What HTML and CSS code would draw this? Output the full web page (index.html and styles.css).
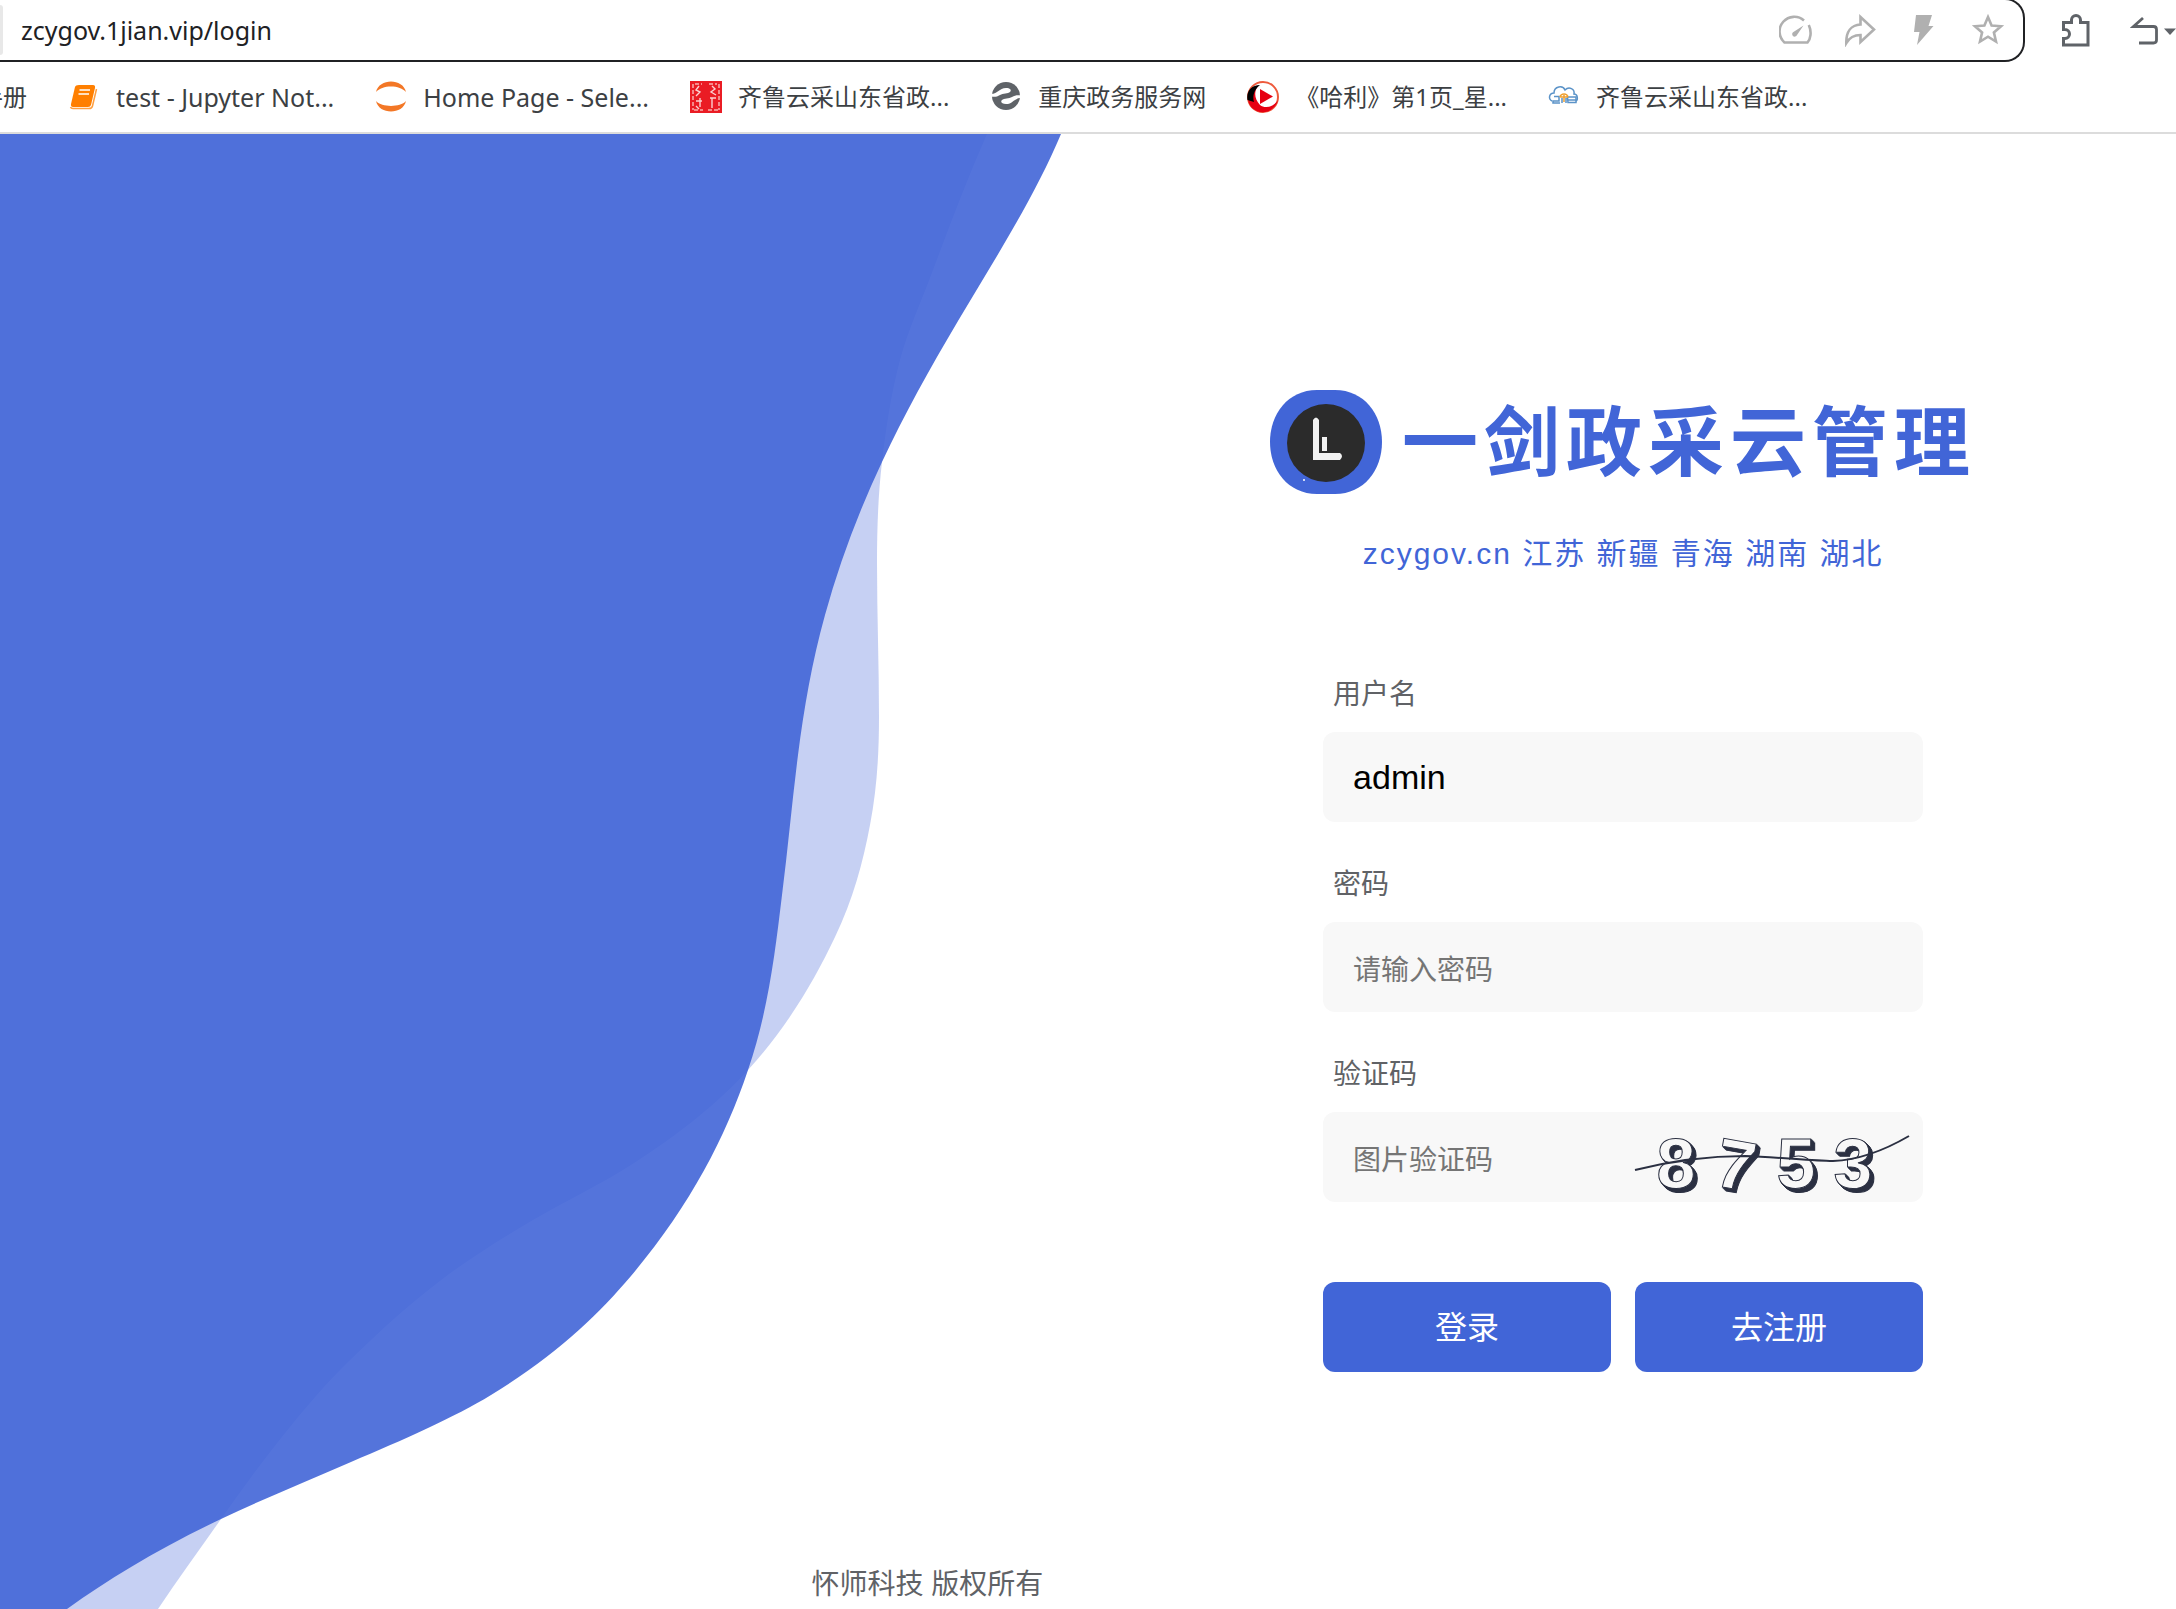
FILE: index.html
```html
<!DOCTYPE html>
<html lang="zh-CN">
<head>
    <meta charset="UTF-8">
    <meta name="viewport" content="width=device-width, initial-scale=1.0">
    <title>一剑政采云管理</title>
    <link rel="stylesheet" href="styles.css">
</head>
<body>
    <header class="browser">
        <div class="toolbar">
            <div class="address">
                <span class="chip"></span>
                <input class="url" type="text" aria-label="地址" value="zcygov.1jian.vip/login">
                <button class="tool" aria-label="测速">
                    <svg width="34" height="34" viewBox="0 0 34 34" fill="none" stroke="#b0b0b0" stroke-width="2.6">
                        <path d="M25 7.500A14.600 14.600 0 0 0 5.500 29.500H28.500C31.500 26 33 19 29.800 12"/>
                        <path d="M24.500 12.500L18 22a2.500 2.500 0 1 1-3.200-3.200Z" fill="#b0b0b0" stroke="none"/>
                    </svg>
                </button>
                <button class="tool" aria-label="分享">
                    <svg width="34" height="34" viewBox="0 0 34 34" fill="none" stroke="#b0b0b0" stroke-width="2.600">
                        <path d="M17.500 4V11.500C8 12 3 19 3.300 30C6.500 24.500 10.500 22 17.500 22V29L31 16.500Z"/>
                    </svg>
                </button>
                <button class="tool" aria-label="加速">
                    <svg width="34" height="34" viewBox="0 0 34 34" fill="#b0b0b0">
                        <path d="M9 2H25L21.500 13H26.500L10 32L12.500 19H7Z"/>
                    </svg>
                </button>
                <button class="tool" aria-label="收藏">
                    <svg width="34" height="34" viewBox="0 0 34 34" fill="none" stroke="#b0b0b0" stroke-width="2.600">
                        <path d="M17 4L20.600 12.500L30 13.300L22.900 19.400L25 28.500L17 23.700L9 28.500L11.100 19.400L4 13.300L13.400 12.500Z"/>
                    </svg>
                </button>
            </div>
            <button class="tool dark" aria-label="扩展">
                <svg width="34" height="34" viewBox="0 0 34 34" fill="none" stroke="#5f6368" stroke-width="3">
                    <path d="M4.500 8.500H12.500V6a4.500 4.500 0 0 1 9 0V8.500H29V31H4.500V24.500H6a4.500 4.500 0 0 0 0-9H4.500Z"/>
                </svg>
            </button>
            <button class="tool dark" aria-label="撤销">
                <svg width="46" height="34" viewBox="0 0 46 34" fill="none" stroke="#5f6368" stroke-width="2.800">
                    <path d="M13 4L3.500 12.500H23.500Q26.500 12.500 26.500 15.500V26Q26.500 29 23.500 29H9"/>
                    <path d="M34 14.500H46L40 21Z" fill="#5f6368" stroke="none"/>
                </svg>
            </button>
        </div>

        <nav class="bookmarks">
            <a class="bookmark cut" href="#">手册</a>
            <a class="bookmark latin" href="#">
                <svg width="32" height="32" viewBox="0 0 32 32">
                    <path d="M11 4H25Q27.500 4 27 7L23 24Q22.500 26 20 26H5Q2.500 26 3 23L7 6Q7.500 4 11 4Z" fill="#ff7f00"/>
                    <path d="M11.500 9H22M10.500 13H21" stroke="#fff" stroke-width="1.500"/>
                    <path d="M28.500 8L24.500 25Q24 27.500 21 27.500H5Q3 27.500 2.500 26" fill="none" stroke="#ff9f40" stroke-width="1.500"/>
                </svg>
                <span>test - Jupyter Not...</span>
            </a>
            <a class="bookmark latin" href="#">
                <svg width="32" height="32" viewBox="0 0 32 32" fill="#f37726">
                    <path d="M1 11C4-3 28-3 31 11C25 3.500 7 3.500 1 11Z"/>
                    <path d="M1 20C4 34 28 34 31 20C25 26.500 7 26.500 1 20Z"/>
                </svg>
                <span>Home Page - Sele...</span>
            </a>
            <a class="bookmark" href="#">
                <svg width="32" height="32" viewBox="0 0 32 32" fill="none">
                    <path d="M0 0H32V32H0Z" fill="#ea1c24"/>
                    <path d="M3 3V29M29 3V29M5 3H12M19 3H27M4 29H13M18 29H28" stroke="#f58a8a" stroke-width="2" stroke-dasharray="4 2"/>
                    <path d="M9 5L6 9L10 11L6 15M10 17V26M6 20H12M22 5L25 8L21 11L26 14M20 17H26M22 17V27M6 25L9 28" stroke="#fbd0d0" stroke-width="1.400"/>
                </svg>
                <span>齐鲁云采山东省政...</span>
            </a>
            <a class="bookmark" href="#">
                <svg width="32" height="32" viewBox="0 0 32 32">
                    <circle cx="16" cy="15" r="14" fill="#5f6368"/>
                    <path d="M1 13C8 13 9 7 16 7C20 7 22 9 20 11C18 13 13 12 10 14C7 16 4 16 1 15.500Z" fill="#fff"/>
                    <path d="M31 17C24 17 23 23 16 23C12 23 10 21 12 19C14 17 19 18 22 16C25 14 28 14 31 14.500Z" fill="#fff"/>
                </svg>
                <span>重庆政务服务网</span>
            </a>
            <a class="bookmark" href="#">
                <svg width="32" height="32" viewBox="0 0 32 32">
                    <circle cx="16" cy="16" r="15" fill="#fff" stroke="#ee5a3c" stroke-width="2"/>
                    <path d="M11 5C1 8-2 20 5 27C14 35 28 31 31 19C27 26 18 28 13 24C7 18 7 10 11 5Z" fill="#e60012"/>
                    <path d="M13 4C4 4-1 11 .500 19L7 21C5 14 8 8 13 4Z" fill="#000"/>
                    <path d="M13 8L26 15.500L13 23Z" fill="#e60012"/>
                </svg>
                <span>《哈利》第1页_星...</span>
            </a>
            <a class="bookmark" href="#">
                <svg width="32" height="32" viewBox="0 0 32 32" fill="none" stroke="#5b93c8" stroke-width="1.500">
                    <path d="M4 20C0 18 1 12 6 12C6 5 15 4 17 9C21 5 27 8 26 13C30 13 30 19 28 20"/>
                    <path d="M6 15.500H11V20H5V22H12M19.500 16H28V21.500H20ZM20 19H28M14 17V22M18 17V22"/>
                    <path d="M12 16C13 12 19 12 20 16M12 16H20M16 14V21" stroke="#f0a030"/>
                </svg>
                <span>齐鲁云采山东省政...</span>
            </a>
        </nav>
    </header>

    <main class="page">
        <!-- background wave -->
        <svg class="wave" viewBox="0 134 1061 1475" preserveAspectRatio="xMinYMin meet" aria-hidden="true">
            <path class="wave-back" d="M0 134H987C967 179 950 225 933 270C922 300 908 330 900 360C891 394 886 428 882 462C878 496 877 530 877 564C877 615 879 666 879 717C879 753 877 789 870 825C863 862 853 900 835 937C814 981 788 1026 748 1070C719 1102 681 1133 631 1165C603 1183 564 1202 533 1220C502 1238 474 1256 449 1274C426 1291 405 1309 386 1326C361 1349 336 1373 316 1396C280 1437 250 1478 221 1519C200 1549 178 1579 158 1609H0Z"/>
            <path class="wave-front" d="M0 134H1061C1035 196 995 259 958 321C930 368 904 415 882 462C858 513 839 564 825 615C812 662 804 708 798 755C792 802 788 848 782 895C775 953 768 1012 748 1070C725 1139 689 1207 631 1276C597 1316 556 1355 491 1395C455 1417 403 1440 351 1462C307 1481 261 1500 221 1519C158 1549 109 1579 67 1609H0Z"/>
        </svg>

        <section class="login">
            <div class="brand">
                <svg class="logo" viewBox="0 0 112 104">
                    <path d="M47 0H65C94 0 112 24 112 52C112 80 94 104 65 104H47C18 104 0 80 0 52C0 24 18 0 47 0Z" fill="#4165d7"/>
                    <circle cx="56" cy="53" r="39" fill="#2b2b2b"/>
                    <path d="M43 30Q46 25 49 30V63H70Q74 66 70 70H43Z" fill="#f2f2f2"/>
                    <path d="M52 47H57V61H52Z" fill="#f2f2f2"/>
                    <circle cx="34" cy="90" r="1" fill="#fff"/>
                </svg>
                <h1>一剑政采云管理</h1>
            </div>
            <p class="subtitle">zcygov.cn 江苏 新疆 青海 湖南 湖北</p>

            <form class="login-form">
                <label for="username">用户名</label>
                <div class="field">
                    <input type="text" id="username" value="admin">
                </div>

                <label for="password">密码</label>
                <div class="field">
                    <input type="password" id="password" placeholder="请输入密码">
                </div>

                <label for="code">验证码</label>
                <div class="field">
                    <input type="text" id="code" placeholder="图片验证码">
                    <button type="button" class="captcha" aria-label="刷新验证码">
                        <svg viewBox="0 0 288 90">
                            <g class="digits">
                                <text x="41" y="76">8</text>
                                <text x="101" y="77" transform="rotate(10 101 52)">7</text>
                                <text x="161" y="76">5</text>
                                <text x="218" y="76">3</text>
                            </g>
                            <path d="M0 58C40 48 75 44 110 44C145 45 175 49 198 49C225 48 250 38 274 24" fill="none" stroke="#2b3042" stroke-width="2"/>
                        </svg>
                    </button>
                </div>

                <div class="actions">
                    <button type="submit">登录</button>
                    <button type="button">去注册</button>
                </div>
            </form>
        </section>

        <footer>怀师科技 版权所有</footer>
    </main>
</body>
</html>
```

FILE: styles.css
```css
html, body
{
    margin: 0;
    padding: 0;
}

*
{
    box-sizing: border-box;
}

body
{
    display: flex;
    flex-direction: column;
    min-height: 100vh;
    overflow-x: hidden;
    font-family: "Liberation Sans", "Noto Sans CJK SC", sans-serif;
    background-color: #fff;
}

button
{
    padding: 0;
    border: none;
    background: none;
    cursor: pointer;
}

/* browser bar */

.browser
{
    border-bottom: 2px solid #dcdcdc;
    font-family: "Noto Sans", "Noto Sans CJK SC", sans-serif;
}

.toolbar
{
    display: flex;
    align-items: center;
    height: 62px;
}

.address
{
    display: flex;
    flex: 1;
    align-items: center;
    gap: 30px;
    height: 64px;
    margin-top: -2px;
    margin-right: 34px;
    padding-right: 18px;
    border: 2px solid #202124;
    border-left: none;
    border-radius: 0 20px 20px 0;
}

.chip
{
    width: 3px;
    height: 50px;
    border-radius: 0 4px 4px 0;
    background-color: #e8e8e8;
}

.url
{
    flex: 1;
    min-width: 0;
    margin-left: -12px;
    padding: 0;
    border: none;
    outline: none;
    background: none;
    font-family: inherit;
    font-size: 25px;
    color: #202124;
}

.tool
{
    display: flex;
}

.tool.dark
{
    margin-right: 37px;
}

.tool.dark:last-child
{
    margin-right: 0;
}

.bookmarks
{
    display: flex;
    align-items: center;
    gap: 41px;
    height: 70px;
    overflow: hidden;
}

.bookmark
{
    display: flex;
    align-items: center;
    gap: 16px;
    font-size: 24px;
    line-height: 36px;
    color: #3c4043;
    text-decoration: none;
    white-space: nowrap;
}

.bookmark.latin
{
    font-size: 25px;
}

.bookmark.cut
{
    margin-left: -21px;
}

/* login page */

.page
{
    position: relative;
    display: grid;
    flex: 1;
    grid-template-columns: 30fr 31fr;
    grid-template-rows: 1fr auto;
}

.wave
{
    position: absolute;
    top: 0;
    left: 0;
    height: 100%;
}

.wave-back
{
    fill: #4165d7;
    opacity: 0.3;
}

.wave-front
{
    fill: #4165d7;
    opacity: 0.9;
}

.login
{
    display: flex;
    grid-column: 2;
    flex-direction: column;
    align-items: center;
    padding-top: 256px;
}

.brand
{
    display: flex;
    align-items: center;
    gap: 20px;
    height: 104px;
}

.logo
{
    width: 112px;
    height: 104px;
}

h1
{
    margin: 0;
    padding-top: 4px;
    font-size: 76px;
    font-weight: 700;
    line-height: 104px;
    letter-spacing: 6px;
    color: #4165d7;
    white-space: nowrap;
}

.subtitle
{
    margin: 38px 0 76px;
    font-size: 30px;
    line-height: 44px;
    letter-spacing: 2px;
    color: #4165d7;
}

.login-form
{
    width: 100%;
    max-width: 600px;
}

.login-form label
{
    display: block;
    padding: 21px 10px 15px;
    font-size: 28px;
    line-height: 44px;
    color: #606266;
}

.field
{
    display: flex;
    height: 90px;
    margin-bottom: 20px;
    border-radius: 12px;
    background-color: #f8f8f8;
}

.field input
{
    flex: 1;
    min-width: 0;
    padding: 0 30px;
    border: none;
    outline: none;
    background: none;
    font-family: inherit;
    font-size: 34px;
    color: #000;
}

.field input::placeholder
{
    font-size: 28px;
    color: #757575;
}

.field input:placeholder-shown
{
    padding-top: 2px;
}

.captcha
{
    width: 48%;
}

.captcha svg
{
    display: block;
    width: 100%;
    overflow: visible;
}

.digits
{
    font-family: "Liberation Sans", sans-serif;
    font-size: 70px;
    font-weight: 700;
    text-anchor: middle;
    fill: #f8f8f8;
    stroke: #2b3042;
    stroke-width: 1px;
    filter: drop-shadow(1px 1px 0 #2b3042) drop-shadow(1px 1px 0 #2b3042) drop-shadow(2px 2px 0 #2b3042);
}

.actions
{
    display: flex;
    gap: 24px;
    padding-top: 60px;
}

.actions button
{
    flex: 1;
    height: 90px;
    padding-bottom: 4px;
    border-radius: 12px;
    background-color: #4165d7;
    font-family: inherit;
    font-size: 32px;
    color: #fff;
}

.actions button:hover
{
    background-color: #3457c8;
}

footer
{
    position: relative;
    padding: 0 27px 2px 0;
    font-size: 28px;
    line-height: 44px;
    text-align: right;
    color: #606266;
}
```
